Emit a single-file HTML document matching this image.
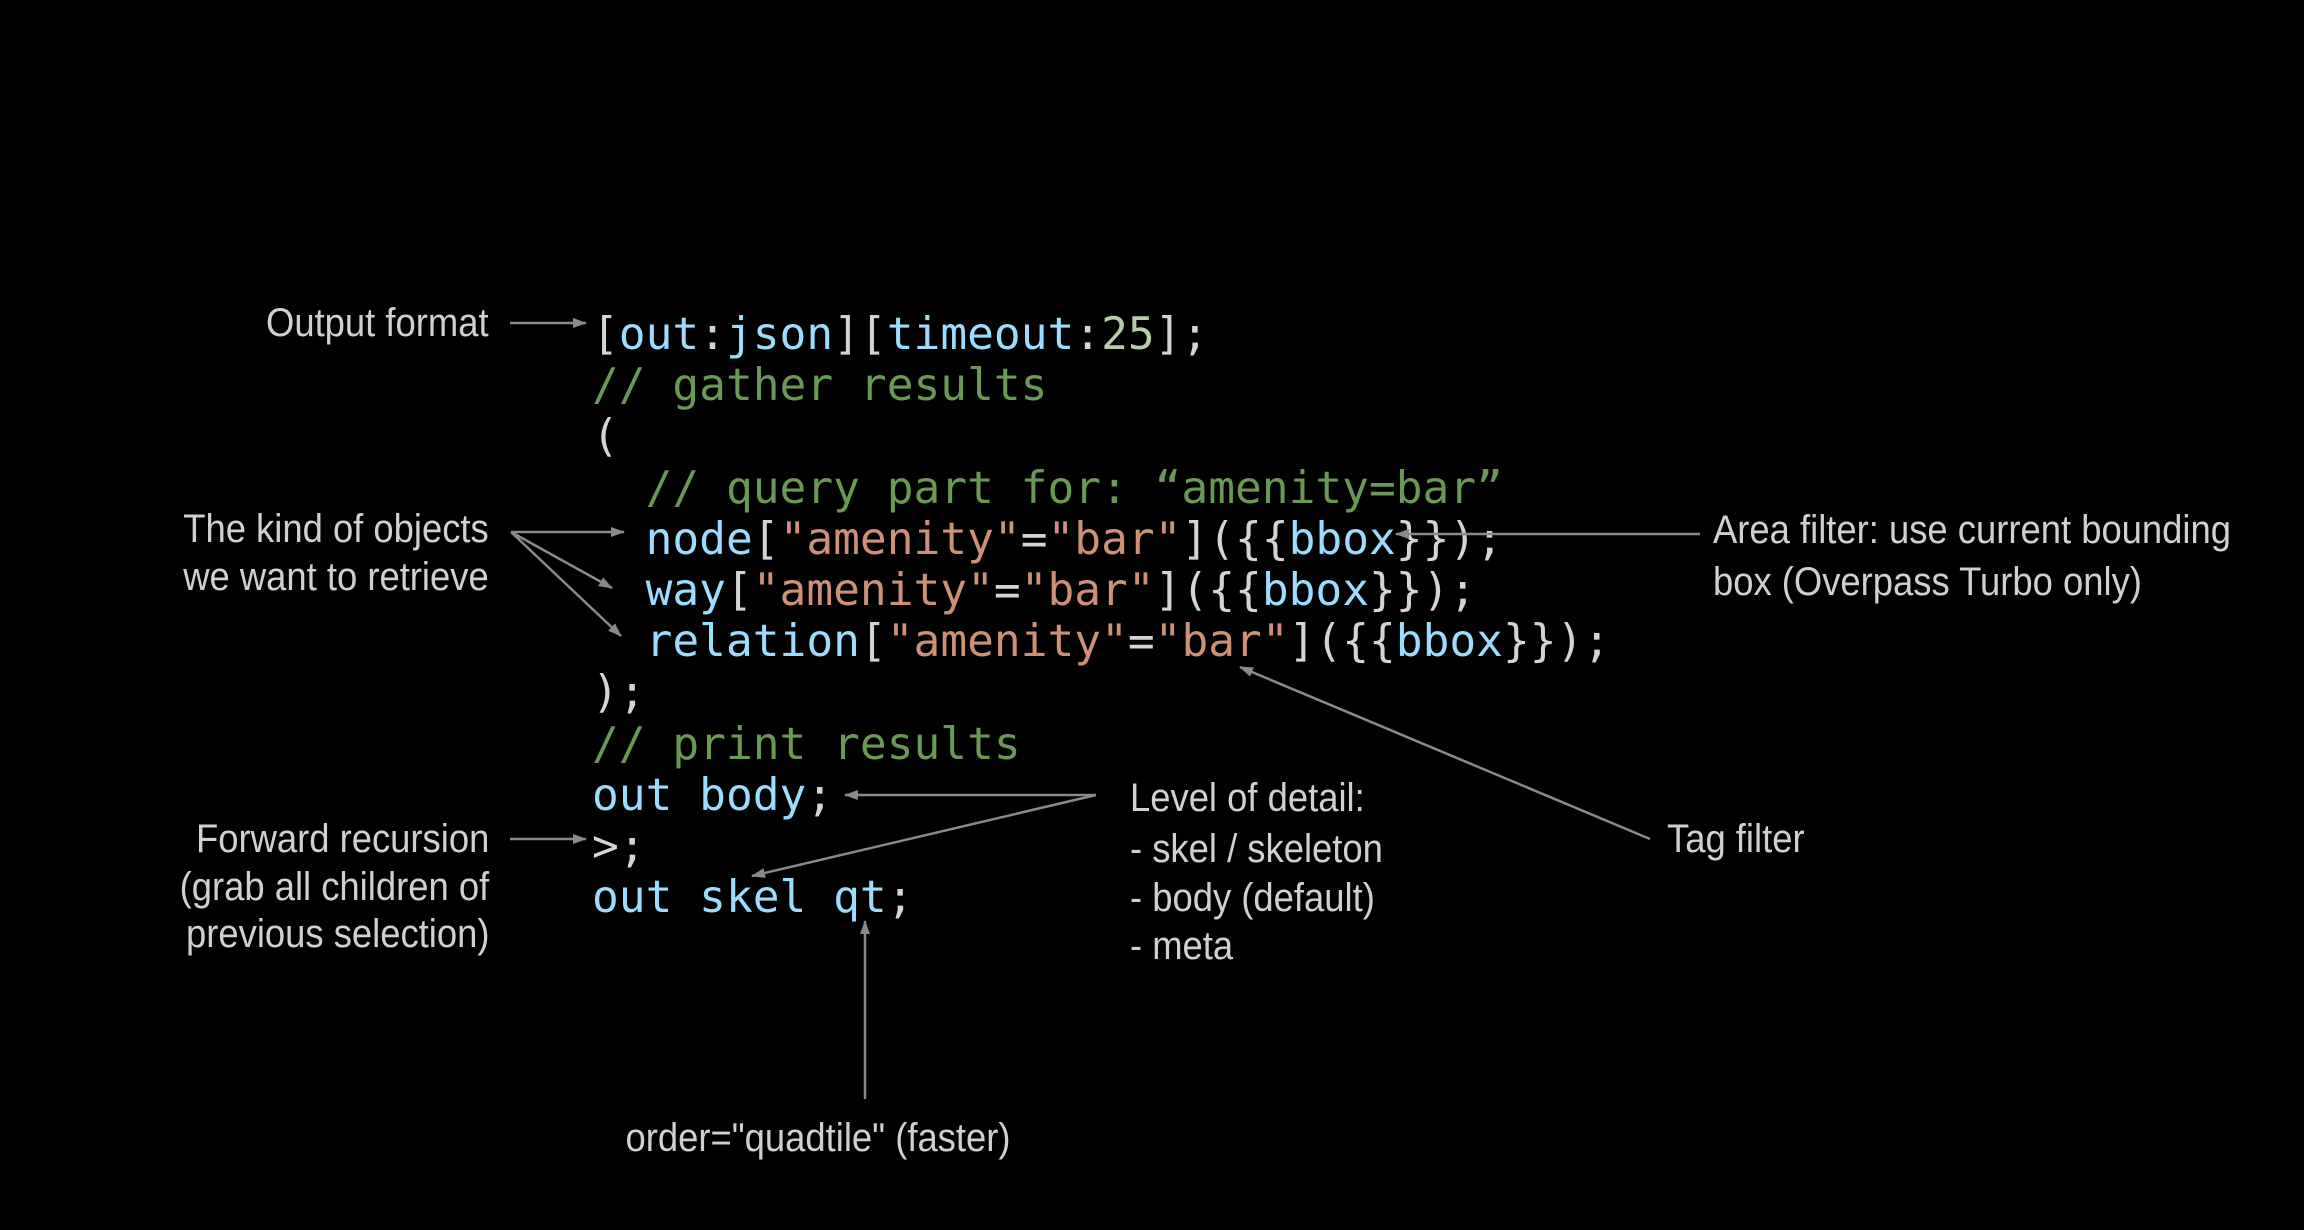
<!DOCTYPE html>
<html><head><meta charset="utf-8"><style>
html,body{margin:0;padding:0;background:#000;width:2304px;height:1230px;overflow:hidden;position:relative}
.code{position:absolute;left:592px;top:309px;font-family:"DejaVu Sans Mono","Liberation Mono",monospace;font-size:44.5px;line-height:51.2px;color:#d4d4d4;white-space:pre}
.k{color:#9cdcfe}.s{color:#ce9178}.c{color:#6a9955}.n{color:#b5cea8}
.a{position:absolute;font-family:"Liberation Sans",sans-serif;font-size:40px;color:#d0d0d0;line-height:48px;white-space:nowrap;transform:scaleX(0.91);transform-origin:left center}
.r{text-align:right;transform-origin:right center}
svg{position:absolute;left:0;top:0}
</style></head><body>
<div class="code">[<span class="k">out</span>:<span class="k">json</span>][<span class="k">timeout</span>:<span class="n">25</span>];
<span class="c">// gather results</span>
(
  <span class="c">// query part for: “amenity=bar”</span>
  <span class="k">node</span>[<span class="s">"amenity"</span>=<span class="s">"bar"</span>]({{<span class="k">bbox</span>}});
  <span class="k">way</span>[<span class="s">"amenity"</span>=<span class="s">"bar"</span>]({{<span class="k">bbox</span>}});
  <span class="k">relation</span>[<span class="s">"amenity"</span>=<span class="s">"bar"</span>]({{<span class="k">bbox</span>}});
);
<span class="c">// print results</span>
<span class="k">out body</span>;
&gt;;
<span class="k">out skel qt</span>;</div>

<div class="a r" style="right:1815px;top:299px">Output format</div>
<div class="a r" style="right:1815px;top:505px">The kind of objects</div>
<div class="a r" style="right:1815px;top:553px">we want to retrieve</div>
<div class="a" style="left:1713px;top:506px">Area filter: use current bounding</div>
<div class="a" style="left:1713px;top:558px">box (Overpass Turbo only)</div>
<div class="a" style="left:1667px;top:815px">Tag filter</div>
<div class="a" style="left:1130px;top:774px">Level of detail:</div>
<div class="a" style="left:1130px;top:825px">- skel / skeleton</div>
<div class="a" style="left:1130px;top:874px">- body (default)</div>
<div class="a" style="left:1130px;top:922px">- meta</div>
<div class="a r" style="right:1815px;top:815px">Forward recursion</div>
<div class="a r" style="right:1815px;top:863px">(grab all children of</div>
<div class="a r" style="right:1815px;top:910px">previous selection)</div>
<div class="a" style="left:818px;top:1114px;transform:translateX(-50%) scaleX(0.91);transform-origin:center">order="quadtile" (faster)</div>

<svg width="2304" height="1230" viewBox="0 0 2304 1230">
<defs><marker id="m" markerWidth="14" markerHeight="12" refX="13" refY="6" orient="auto" markerUnits="userSpaceOnUse"><path d="M0,1 L14,6 L0,11 z" fill="#8a8a8a"/></marker></defs>
<g stroke="#8a8a8a" stroke-width="2.5" fill="none" marker-end="url(#m)">
<line x1="510" y1="323" x2="586" y2="323"/>
<line x1="511" y1="532" x2="624" y2="532"/>
<line x1="511" y1="532" x2="612" y2="588"/>
<line x1="511" y1="532" x2="621" y2="636"/>
<line x1="1700" y1="534" x2="1396" y2="534"/>
<line x1="1650" y1="839" x2="1240" y2="667"/>
<line x1="1096" y1="795" x2="845" y2="795"/>
<line x1="1096" y1="795" x2="752" y2="876"/>
<line x1="510" y1="839" x2="586" y2="839"/>
<line x1="865" y1="1099" x2="865" y2="921"/>
</g>
</svg>
</body></html>
